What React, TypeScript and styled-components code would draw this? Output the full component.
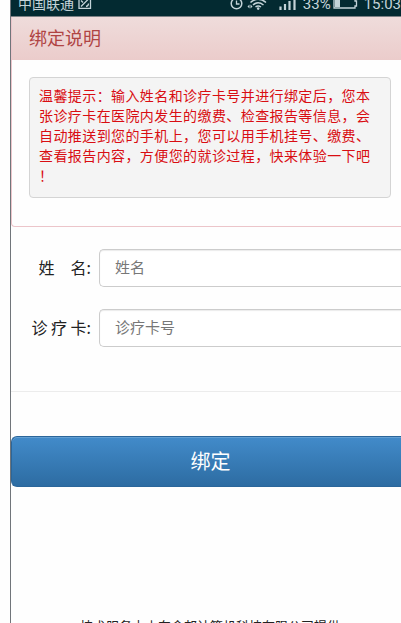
import React from "react";
import styled, { createGlobalStyle } from "styled-components";

const GlobalStyle = createGlobalStyle`
  *, *::before, *::after { box-sizing: border-box; }
  html, body, #root { height: 100%; }
  body {
    margin: 0;
    overflow: hidden;
    background: #fefefe;
    color: #222;
    font-family: "Noto Sans CJK SC", sans-serif;
  }
  button, input { font-family: inherit; }
`;

const Screen = styled.div`
  display: flex;
  flex-direction: column;
  height: 100%;
  margin-left: 10px;
  border-left: 1px solid #70757a;
  overflow: hidden;
`;

const StatusBar = styled.header`
  display: flex;
  flex: none;
  align-items: flex-end;
  justify-content: space-between;
  height: 17px;
  padding: 0 0 3px 7px;
  background: #032a31;
  border-bottom: 1px solid #7b8084;
  color: #c3d3d8;
  overflow: hidden;
`;

const Carrier = styled.div`
  display: flex;
  align-items: flex-end;
  gap: 4px;
  font-size: 14px;
  line-height: 20px;
`;

const Indicators = styled.div`
  display: flex;
  align-items: flex-end;
  font-family: Roboto, sans-serif;
  font-size: 15px;
  line-height: 18px;
  white-space: nowrap;

  svg { display: block; flex: none; }
`;

const Level = styled.span`
  margin: 0 2px 0 4px;
`;

const Clock = styled.time`
  margin-left: 6px;
`;

const Panel = styled.section`
  flex: none;
  border-bottom: 1px solid #ecc5ca;
  border-left: 1px solid #ecc5ca;
  border-radius: 0 0 0 4px;
`;

const PanelTitle = styled.h1`
  margin: 0;
  padding: 0 17px 2px;
  background: linear-gradient(#efdcdb, #ebcccb);
  color: #b04443;
  font-size: 18px;
  font-weight: 400;
  line-height: 41px;
`;

const Notice = styled.p`
  margin: 17px 10px 28px 17px;
  padding: 7px 20px 12px 9px;
  background: #f4f4f4;
  border: 1px solid #d4d4d4;
  border-radius: 4px;
  color: #d90d12;
  font-size: 14px;
  line-height: 20px;
  line-break: anywhere;
  text-align: justify;
`;

const Form = styled.form`
  flex: none;
`;

const Fields = styled.div`
  display: grid;
  gap: 22px;
  padding: 22px 0 44px;
  border-bottom: 1px solid #ececec;
`;

const Field = styled.div`
  display: grid;
  grid-template-columns: 80px 1fr;
  align-items: center;
  column-gap: 8px;
`;

const Label = styled.label`
  padding-bottom: 2px;
  font-size: 16px;
  line-height: 20px;
  text-align: right;
  white-space: pre;
`;

const TextInput = styled.input`
  width: 100%;
  height: 38px;
  padding: 0 15px 3px;
  background: #fff;
  border: 1px solid #ccc;
  border-right: 0;
  border-radius: 5px 0 0 5px;
  box-shadow: inset 0 1px 1px #ececec;
  font-size: 15px;

  &::placeholder { color: #777; opacity: 1; }
`;

const SubmitButton = styled.button`
  display: block;
  width: 100%;
  height: 51px;
  margin-top: 44px;
  padding: 0 0 2px 8px;
  background: linear-gradient(#428bca, #2d6ca2);
  border: 1px solid #2b669a;
  border-right: 0;
  border-radius: 6px 0 0 6px;
  box-shadow: inset 0 1px 0 #639fd2;
  color: #fff;
  font-size: 20px;
`;

const Footer = styled.footer`
  flex: none;
  margin-top: 129px;
  padding-left: 8px;
  font-size: 13px;
  line-height: 20px;
  text-align: center;
  white-space: nowrap;
`;

const CardIcon = () => (
  <svg width="14" height="13" viewBox="0 0 14 13" fill="none" stroke="#c3d3d8" strokeWidth="1.3">
    <path d="M1 -2V8.300H12.500V-2" />
    <path d="M3 6.500L10.500 -1M3 0.500L5 2.500M8 6.500Q10.500 6 10.500 3.500" />
  </svg>
);

const SignalIcons = () => (
  <svg width="70" height="13" viewBox="0 0 70 13" fill="none" stroke="#c3d3d8">
    <circle cx="7.500" cy="3.500" r="5.300" strokeWidth="1.500" />
    <path d="M7.500 0.500V4H10.500" strokeWidth="1.300" />
    <path d="M21.500 2.500Q29 -4 37 2.500M24 5Q29 0.500 34.500 5M26.500 7Q29 5 32 7" strokeWidth="1.500" />
    <circle cx="29.200" cy="8.600" r="1.300" fill="#c3d3d8" stroke="none" />
    <path d="M18.500 6.500L20.500 4.500V8.500ZM21.500 4.500L23.500 6.500L21.500 8.500Z" fill="#c3d3d8" stroke="none" />
    <path d="M51.500 6.500V10M56 4V10M60.500 1V10M65.500 -2V10" strokeWidth="2.200" />
  </svg>
);

const BatteryIcon = () => (
  <svg width="25" height="13" viewBox="0 0 25 13">
    <path d="M1 -2V8H22V6H23.500V1H22V-2" fill="none" stroke="#c3d3d8" strokeWidth="1.300" />
    <path d="M2 -1H7V7H2Z" fill="#c3d3d8" />
  </svg>
);

const fields = [
  { id: "name", label: "姓　名:", placeholder: "姓名" },
  { id: "card", label: "诊 疗 卡:", placeholder: "诊疗卡号" },
];

export default function App() {
  return (
    <>
      <GlobalStyle />
      <Screen>
        <StatusBar>
          <Carrier>
            中国联通
            <CardIcon />
          </Carrier>
          <Indicators>
            <SignalIcons />
            <Level>33%</Level>
            <BatteryIcon />
            <Clock>15:03</Clock>
          </Indicators>
        </StatusBar>
        <Panel>
          <PanelTitle>绑定说明</PanelTitle>
          <Notice>
            温馨提示：输入姓名和诊疗卡号并进行绑定后，您本张诊疗卡在医院内发生的缴费、检查报告等信息，会自动推送到您的手机上，您可以用手机挂号、缴费、查看报告内容，方便您的就诊过程，快来体验一下吧！
          </Notice>
        </Panel>
        <Form onSubmit={(event) => event.preventDefault()}>
          <Fields>
            {fields.map((field) => (
              <Field key={field.id}>
                <Label htmlFor={field.id}>{field.label}</Label>
                <TextInput id={field.id} type="text" placeholder={field.placeholder} />
              </Field>
            ))}
          </Fields>
          <SubmitButton type="submit">绑定</SubmitButton>
        </Form>
        <Footer>技术服务由山东金邦计算机科技有限公司提供</Footer>
      </Screen>
    </>
  );
}
